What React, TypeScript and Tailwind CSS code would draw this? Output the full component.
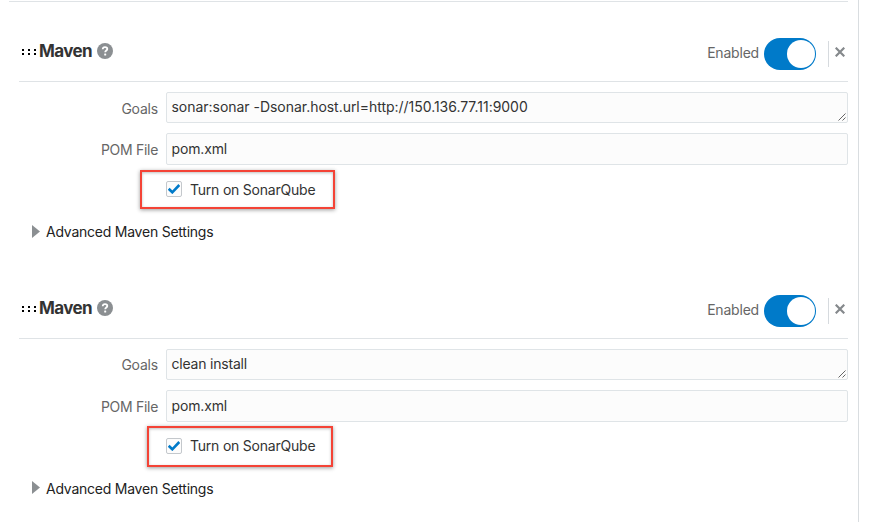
type StepProps = {
  goals: string;
  goalsSpacing: string;
  frame: string;
  labelShift: string;
  checkShift: string;
  arrowShift: string;
};

function HelpIcon() {
  return (
    <svg className="ml-[5px] size-4" viewBox="0 0 16 16" fill="none">
      <circle cx="8" cy="8" r="8" fill="#8b8f92" />
      <path d="M5.7 6.2C5.8 4.8 6.7 4.1 8 4.1s2.3.8 2.3 1.9c0 1.5-2.1 1.6-2.1 3.3" stroke="#fff" strokeWidth="1.8" />
      <rect x="7.2" y="10.5" width="2" height="2" rx=".5" fill="#fff" />
    </svg>
  );
}

function Grip() {
  return (
    <svg className="mt-[3px] h-[7px] w-[14px]" viewBox="0 0 14 7" fill="#000">
      <path d="M0 0h2v2H0zM6 0h2v2H6zM12 0h2v2h-2zM0 4h2v2H0zM6 4h2v2H6zM12 4h2v2h-2z" />
    </svg>
  );
}

function MavenStep({ goals, goalsSpacing, frame, labelShift, checkShift, arrowShift }: StepProps) {
  return (
    <section className="h-[257px]">
      <div className="ml-[19px] flex h-20 w-[829px] items-start border-b border-[#dfe3e6]">
        <div className="ml-[3px] mt-[37px] flex h-6 items-center">
          <Grip />
          <h2 className="ml-[3px] w-[53px] whitespace-nowrap text-[17px] font-bold leading-6 tracking-[-0.6px] text-[#333]">Maven</h2>
          <HelpIcon />
        </div>
        <span className="ml-auto mr-[5px] mt-[41px] text-[14px] leading-5 tracking-[-0.2px] text-[#666]">Enabled</span>
        <div className="mt-9 flex h-8 w-[52px] items-center justify-end rounded-full bg-[#007ac9] pr-px">
          <div className="size-7 rounded-full bg-white" />
        </div>
        <div className="ml-3 mt-[39px] h-[26px] w-px bg-[#d6dade]" />
        <svg className="ml-[6px] mr-[3px] mt-[45px] size-[10px]" viewBox="0 0 10 10" stroke="#85898c" strokeWidth="2.2">
          <path d="M.7.7l8.6 8.6M9.3.7L.7 9.3" />
        </svg>
      </div>

      <div className="mt-[10px] flex h-[31px]">
        <span className={`w-[158px] text-right text-[14px] leading-5 tracking-[-0.2px] text-[#666] ${labelShift}`}>Goals</span>
        <div className="ml-2 flex w-[682px] justify-between rounded-[2px] border border-[#dfe4e7] bg-[#fcfcfc] pl-[4.5px]">
          <span className={`mt-1 text-[14px] leading-5 text-[#333] ${goalsSpacing}`}>{goals}</span>
          <svg className="mb-px mr-px size-2 self-end" viewBox="0 0 8 8" stroke="#555" strokeWidth=".9">
            <path d="M.5 7.5l7-7M4.5 7.5l3-3" />
          </svg>
        </div>
      </div>

      <div className="mt-[10px] flex h-8">
        <span className="mt-[7px] w-[158px] text-right text-[14px] leading-5 tracking-[-0.3px] text-[#666]">POM File</span>
        <div className="ml-2 w-[682px] rounded-[2px] border border-[#dfe4e7] bg-[#fcfcfc] pl-[4.5px] pt-[5px] text-[14px] leading-5 tracking-[-0.15px] text-[#333]">pom.xml</div>
      </div>

      <div className="relative flex h-11 pl-[166px] pt-4">
        <div className={`absolute border-2 border-[#f44336] shadow-[0_1px_4px_rgba(0,0,0,0.4),inset_0_1px_3px_rgba(0,0,0,0.25)] ${frame}`} />
        <div className="flex size-4 items-center justify-center rounded-[2px] border border-[#c4c8cc] bg-[#fcfcfc]">
          <svg className="h-[10px] w-3" viewBox="0 0 12 10" fill="none" stroke="#007ac9" strokeWidth="2.6">
            <path d="M.7 4.8l3.6 3.5L11.3 1" />
          </svg>
        </div>
        <span className={`ml-2 text-[14px] leading-5 tracking-[-0.22px] text-[#333] ${checkShift}`}>Turn on SonarQube</span>
      </div>

      <div className="flex pl-8 pt-[13px]">
        <svg className={`h-[13px] w-2 ${arrowShift}`} viewBox="0 0 8 13" fill="#8b8f92">
          <path d="M0 0l8 6.5L0 13z" />
        </svg>
        <span className="ml-[6px] text-[14px] leading-5 tracking-[-0.235px] text-[#222]">Advanced Maven Settings</span>
      </div>
    </section>
  );
}

export default function App() {
  return (
    <main className="h-[522px] w-[878px] overflow-hidden bg-white font-['Inter',sans-serif]">
      <div className="h-full w-[859px] border-r border-[#d9dde0] pt-px">
        <div className="ml-[9px] h-px w-[839px] bg-[#dfe3e6]" />
        <MavenStep
          goals="sonar:sonar -Dsonar.host.url=http://150.136.77.11:9000"
          goalsSpacing="tracking-[-0.03px]"
          frame="left-[140px] top-[5px] h-[39px] w-[195px]"
          labelShift="mt-[7px]"
          checkShift="-mt-px"
          arrowShift="mt-[3px]"
        />
        <MavenStep
          goals="clean install"
          goalsSpacing="tracking-[-0.2px]"
          frame="left-[147px] top-[4px] h-[41px] w-[186px]"
          labelShift="mt-[6px]"
          checkShift="-mt-[2px]"
          arrowShift="mt-[2px]"
        />
      </div>
    </main>
  );
}
